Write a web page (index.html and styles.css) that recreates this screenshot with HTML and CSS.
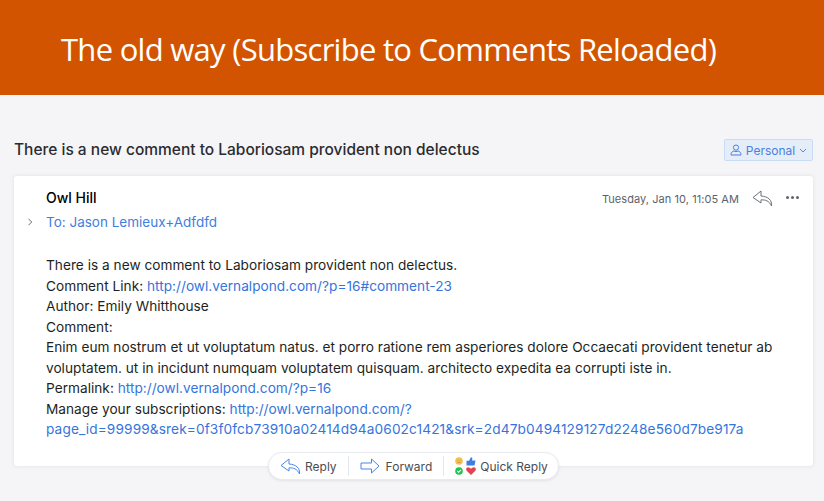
FILE: index.html
```html
<!DOCTYPE html>
<html lang="en">
<head>
<meta charset="utf-8">
<title>The old way</title>
<link rel="stylesheet" href="styles.css">
</head>
<body>
<header class="banner"><h1>The old way (Subscribe to Comments Reloaded)</h1></header>
<main class="mail">
  <div class="subject-row">
    <h2>There is a new comment to Laboriosam provident non delectus</h2>
    <span class="tag">
      <svg width="12" height="12" viewBox="0 0 12 12" fill="none" stroke="#4a80e0" stroke-width="1"><circle cx="6" cy="3.600" r="2.600"/><path d="M1 11c0-2.400 1.200-3.600 2.800-3.900 1.300.5 3.100.5 4.400 0C9.800 7.400 11 8.600 11 11z"/></svg>
      Personal
      <svg width="8" height="5" viewBox="0 0 8 5" fill="none" stroke="#5a8ae0" stroke-width="1"><path d="M1 1l3 3 3-3"/></svg>
    </span>
  </div>
  <article class="card">
    <div class="head">
      <div class="chev"><svg width="6" height="8" viewBox="0 0 6 8" fill="none" stroke="#666b75" stroke-width="1"><path d="M1.500 .8L4.700 4 1.500 7.200"/></svg></div>
      <div class="who">
        <div class="sender">Owl Hill</div>
        <div class="to">To: Jason Lemieux+Adfdfd</div>
      </div>
      <div class="meta">
        <time>Tuesday, Jan 10, 11:05 AM</time>
        <svg class="meta-reply" width="21" height="17" viewBox="0 0 21 17" fill="none" stroke="#6d7178" stroke-width="1"><path d="M9 1L1 7.500 9 13V9.800c4.500 0 8 .8 10.500 6.200 .8-6-3.500-9.500-10.500-10z"/></svg>
        <span class="dots"><i></i><i></i><i></i></span>
      </div>
    </div>
    <div class="body">
      <p>There is a new comment to Laboriosam provident non delectus.</p>
      <p>Comment Link: <a>http://owl.vernalpond.com/?p=16#comment-23</a></p>
      <p>Author: Emily Whitthouse</p>
      <p>Comment:</p>
      <p>Enim eum nostrum et ut voluptatum natus. et porro ratione rem asperiores dolore Occaecati provident tenetur ab voluptatem. ut in incidunt numquam voluptatem quisquam. architecto expedita ea corrupti iste in.</p>
      <p>Permalink: <a>http://owl.vernalpond.com/?p=16</a></p>
      <p>Manage your subscriptions: <a>http://owl.vernalpond.com/?<br><span class="token">page_id=99999&amp;srek=0f3f0fcb73910a02414d94a0602c1421&amp;srk=2d47b0494129127d2248e560d7be917a</span></a></p>
    </div>
    <nav class="actions">
      <span class="act">
        <svg width="21" height="17" viewBox="0 0 21 17" fill="none" stroke="#4a86e8" stroke-width="1"><path d="M9 1L1 7.500 9 13V9.800c4.500 0 8 .8 10.500 6.200 .8-6-3.500-9.500-10.500-10z"/></svg>
        Reply
      </span>
      <span class="sep"></span>
      <span class="act fwd">
        <svg width="20" height="16" viewBox="0 0 20 16" fill="none" stroke="#4a86e8" stroke-width="1"><path d="M1 5h10.500V1L19 8l-7.500 7v-4H1z"/></svg>
        Forward
      </span>
      <span class="sep"></span>
      <span class="act quick">
        <svg width="21" height="18" viewBox="0 0 21 18"><circle cx="4" cy="4" r="3.800" fill="#f5bf4f"/><path d="M2.500 3.200h.8M4.700 3.200h.8M2.500 5.300h3" stroke="#b98a20" stroke-width=".7"/><path d="M11.500 3.800h2.500l2-3.600c1.200 0 1.600 1 1.300 2l-.3 1.300H20.500l-1 5h-8z" fill="#3d7fe0"/><circle cx="4" cy="14" r="3.800" fill="#1fc44b"/><path d="M2.300 14l1.300 1.300 2.400-2.500" stroke="#fff" stroke-width="1.100" fill="none"/><path d="M16 18l-4.300-4.300c-1.800-2 .9-4.700 3-2.900l1.300 1 1.300-1c2.100-1.800 4.800.9 3 2.900z" fill="#e5404f"/></svg>
        Quick Reply
      </span>
    </nav>
  </article>
</main>
</body>
</html>
```
FILE: styles.css
```css
* { box-sizing: border-box; }
html, body { margin: 0; padding: 0; }
body {
  width: 824px;
  height: 501px;
  overflow: hidden;
  background: #f5f5f8;
  font-family: Inter, "Liberation Sans", sans-serif;
  color: #1d1f23;
}
.banner {
  height: 95px;
  background: #d35400;
  padding: 28px 0 0 61px;
}
.banner h1 {
  margin: 0;
  font: 400 31px/43px "Open Sans", "Noto Sans", sans-serif;
  color: #fff;
  letter-spacing: -0.72px;
}
.mail { padding: 0 11px 0 14px; }
.subject-row {
  height: 81px;
  padding-top: 44px;
  display: flex;
  justify-content: space-between;
  align-items: flex-start;
}
.subject-row h2 {
  margin: 1px 0 0;
  font-size: 15.5px;
  line-height: 20px;
  font-weight: 500;
  color: #2a2c31;
}
.tag {
  margin-top: 0;
  height: 22px;
  width: 89px;
  display: flex;
  align-items: center;
  justify-content: center;
  gap: 4px;
  font-size: 12px;
  color: #4a80e0;
  background: #e5edf9;
  border: 1px solid #c9dcf6;
  border-radius: 2px;
}
.card {
  position: relative;
  height: 290px;
  background: #fff;
  border-radius: 3px;
  box-shadow: 0 0 4px rgba(80, 60, 60, .12);
  padding: 12px 0 0;
}
.head { display: flex; height: 46px; }
.chev { width: 32px; padding: 22px 0 0 13px; }
.who { flex: 1; }
.sender { font-size: 14px; line-height: 20px; font-weight: 500; color: #000; }
.to { margin-top: 4px; font-size: 13.5px; line-height: 20px; color: #3f7ee0; }
.meta {
  display: flex;
  align-items: flex-start;
  padding-right: 14px;
}
.meta time { font-size: 11px; line-height: 20px; color: #5d626b; margin-top: 1px; letter-spacing: .06px; }
.meta-reply { margin: 2px 0 0 13px; }
.dots { display: flex; gap: 2px; margin: 8px 0 0 13px; }
.dots i { width: 3px; height: 3px; border-radius: 50%; background: #5f636b; }
.body {
  padding: 21px 32px 0 32px;
  font-size: 13.65px;
  line-height: 20.5px;
  letter-spacing: .02px;
  color: #1d1f23;
}
.body p { margin: 0; }
.body a { color: #3574dd; }
.body .token { letter-spacing: .13px; }
.actions {
  position: absolute;
  left: 254px;
  top: 276px;
  width: 291px;
  height: 28px;
  display: flex;
  align-items: center;
  padding-left: 11px;
  background: #fff;
  border: 1px solid #e9ebf0;
  border-radius: 14px;
  box-shadow: 0 1px 3px rgba(0, 0, 0, .08);
  font-size: 12px;
  color: #4a4d54;
}
.act { display: flex; align-items: center; gap: 4px; }
.act.fwd { gap: 6px; }
.sep { width: 1px; height: 20px; background: #e3e8ef; margin: 0 11px; }
```
